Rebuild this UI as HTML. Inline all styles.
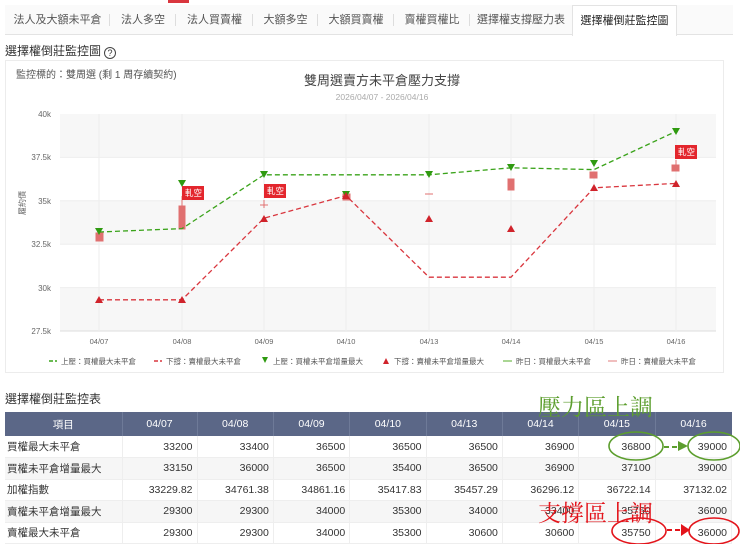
<!DOCTYPE html>
<html><head><meta charset="utf-8">
<style>
*{margin:0;padding:0;box-sizing:border-box}
body{width:740px;height:544px;overflow:hidden;background:#fff;font-family:"Liberation Sans","Noto Sans CJK TC",sans-serif;color:#333;position:relative}
.tabs{position:absolute;left:5px;top:5px;width:728px;height:30px;border-bottom:1px solid #e3e3e3;background:#fafafa;display:flex;font-size:11px;color:#555}
.tabs div{height:30px;line-height:30px;text-align:center;position:relative}
.tabs div.sep:after{content:"";position:absolute;right:0;top:9px;height:12px;border-right:1px solid #ddd}
.tabs .act{background:#fff;border:1px solid #e3e3e3;border-bottom:none;height:31px;color:#222}
.redbar{position:absolute;left:168px;top:0;width:21px;height:3px;background:#d9363e}
.h1{position:absolute;left:5px;top:42px;font-size:12px;color:#333}
.q{display:inline-block;width:12px;height:12px;border:1px solid #444;border-radius:50%;font-size:9px;line-height:10px;text-align:center;vertical-align:-1px;margin-left:3px}
table{position:absolute;left:5px;top:412px;border-collapse:collapse;font-size:10.5px;width:727px}
th{background:#5b6787;color:#fff;font-weight:normal;height:24px;border-right:1px solid #6e7a98}
td{height:21.5px;text-align:right;padding-right:4px;border-right:1px solid #eee;border-bottom:1px solid #eee;color:#333}
td:first-child{text-align:left;padding-left:2px}
tr:nth-child(odd) td{background:#f6f6f6}
</style></head><body>
<div class="redbar"></div>
<div class="tabs">
<div class="sep" style="width:105px">法人及大額未平倉</div>
<div class="sep" style="width:66px">法人多空</div>
<div class="sep" style="width:77px">法人買賣權</div>
<div class="sep" style="width:65px">大額多空</div>
<div class="sep" style="width:76px">大額買賣權</div>
<div class="sep" style="width:76px">賣權買權比</div>
<div style="width:102px">選擇權支撐壓力表</div>
<div class="act" style="width:105px">選擇權倒莊監控圖</div>
</div>
<div class="h1">選擇權倒莊監控圖<span class="q">?</span></div>
<svg width="740" height="405" style="position:absolute;left:0;top:0" font-family="Liberation Sans,Noto Sans CJK TC,sans-serif">
<rect x="5.5" y="60.5" width="718" height="312" fill="#fff" stroke="#ececec"/>
<text x="16" y="78" font-size="10" fill="#555" dy="0">監控標的：雙周選 (剩 1 周存續契約)</text>
<text x="382" y="85" font-size="13" fill="#444" text-anchor="middle">雙周選賣方未平倉壓力支撐</text>
<text x="382" y="100" font-size="8.5" fill="#aaa" text-anchor="middle">2026/04/07 - 2026/04/16</text>
<rect x="60" y="114" width="656" height="43.4" fill="#f7f7f7"/>
<rect x="60" y="200.8" width="656" height="43.4" fill="#f7f7f7"/>
<rect x="60" y="287.6" width="656" height="43.4" fill="#f7f7f7"/>
<g stroke="#eee"><line x1="60" y1="157.4" x2="716" y2="157.4"/><line x1="60" y1="200.8" x2="716" y2="200.8"/><line x1="60" y1="244.2" x2="716" y2="244.2"/><line x1="60" y1="287.6" x2="716" y2="287.6"/><line x1="60" y1="331" x2="716" y2="331" stroke="#ddd"/>
<path d="M99 114V331M182 114V331M264 114V331M346 114V331M429 114V331M511 114V331M594 114V331M676 114V331"/></g>
<g font-size="8" fill="#666" text-anchor="end"><text x="51" y="117">40k</text><text x="51" y="160">37.5k</text><text x="51" y="204">35k</text><text x="51" y="247">32.5k</text><text x="51" y="291">30k</text><text x="51" y="334">27.5k</text></g>
<text transform="translate(25,215) rotate(-90)" font-size="8" fill="#666">履約價</text>
<g font-size="7.5" fill="#666" text-anchor="middle"><text x="99" y="344">04/07</text><text x="182" y="344">04/08</text><text x="264" y="344">04/09</text><text x="346" y="344">04/10</text><text x="429" y="344">04/13</text><text x="511" y="344">04/14</text><text x="594" y="344">04/15</text><text x="676" y="344">04/16</text></g>
<g fill="#e07070" stroke="#e07070"><rect x="96" y="233" width="7" height="8"/><rect x="179" y="206" width="6" height="23"/><line x1="182" y1="196" x2="182" y2="206"/><rect x="343" y="194" width="7" height="6"/><line x1="260" y1="205" x2="268" y2="205"/><line x1="264" y1="200" x2="264" y2="208"/><line x1="425" y1="194" x2="433" y2="194"/><rect x="508" y="179" width="6" height="11"/><rect x="590" y="172" width="7" height="6"/><rect x="672" y="165" width="7" height="6"/><line x1="676" y1="160" x2="676" y2="165"/></g>
<path d="M99 232L182 228.6L264 174.8L429 174.8L511 167.8L594 169.6L676 131.4" fill="none" stroke="#3aa31a" stroke-width="1.3" stroke-dasharray="5,3"/>
<path d="M99 299.8L182 299.8L264 218.2L346 195.6L429 277.2L511 277.2L594 187.8L676 183.4" fill="none" stroke="#d9363e" stroke-width="1.3" stroke-dasharray="5,3"/>
<g fill="#2f9a10"><path d="M95 228h8l-4 7z"/><path d="M178 180h8l-4 7z"/><path d="M260 171h8l-4 7z"/><path d="M342 191h8l-4 7z"/><path d="M425 171h8l-4 7z"/><path d="M507 164h8l-4 7z"/><path d="M590 160h8l-4 7z"/><path d="M672 128h8l-4 7z"/></g>
<g fill="#d0232b"><path d="M95 303h8l-4-7z"/><path d="M178 303h8l-4-7z"/><path d="M260 222h8l-4-7z"/><path d="M342 199h8l-4-7z"/><path d="M425 222h8l-4-7z"/><path d="M507 232h8l-4-7z"/><path d="M590 191h8l-4-7z"/><path d="M672 187h8l-4-7z"/></g>
<g font-size="8.5" fill="#fff"><rect x="182" y="186" width="22" height="14" fill="#e3262d"/><text x="185" y="196">軋空</text><rect x="264" y="184" width="22" height="14" fill="#e3262d"/><text x="267" y="194">軋空</text><rect x="675" y="145" width="22" height="14" fill="#e3262d"/><text x="678" y="155">軋空</text></g>
<g font-size="7.5" fill="#555">
<path d="M49 361h4M55 361h2" stroke="#3aa31a" stroke-width="1.5"/><text x="61" y="364">上壓：買權最大未平倉</text>
<path d="M154 361h4M160 361h2" stroke="#d9363e" stroke-width="1.5"/><text x="166" y="364">下撐：賣權最大未平倉</text>
<path d="M262 357h6l-3 6z" fill="#2f9a10"/><text x="273" y="364">上壓：買權未平倉增量最大</text>
<path d="M383 364h6l-3-6z" fill="#d0232b"/><text x="394" y="364">下撐：賣權未平倉增量最大</text>
<path d="M503 361h9" stroke="#7dc05a" stroke-width="1.3"/><text x="516" y="364">昨日：買權最大未平倉</text>
<path d="M608 361h9" stroke="#e89a9a" stroke-width="1.3"/><text x="621" y="364">昨日：賣權最大未平倉</text>
</g>
<text x="5" y="403" font-size="12" fill="#333">選擇權倒莊監控表</text>
</svg>
<table>
<tr><th style="width:117px">項目</th><th style="width:75px">04/07</th><th>04/08</th><th>04/09</th><th>04/10</th><th>04/13</th><th>04/14</th><th>04/15</th><th style="border:none">04/16</th></tr>
<tr><td>買權最大未平倉</td><td>33200</td><td>33400</td><td>36500</td><td>36500</td><td>36500</td><td>36900</td><td>36800</td><td>39000</td></tr>
<tr><td>買權未平倉增量最大</td><td>33150</td><td>36000</td><td>36500</td><td>35400</td><td>36500</td><td>36900</td><td>37100</td><td>39000</td></tr>
<tr><td>加權指數</td><td>33229.82</td><td>34761.38</td><td>34861.16</td><td>35417.83</td><td>35457.29</td><td>36296.12</td><td>36722.14</td><td>37132.02</td></tr>
<tr><td>賣權未平倉增量最大</td><td>29300</td><td>29300</td><td>34000</td><td>35300</td><td>34000</td><td>33400</td><td>35750</td><td>36000</td></tr>
<tr><td>賣權最大未平倉</td><td>29300</td><td>29300</td><td>34000</td><td>35300</td><td>30600</td><td>30600</td><td>35750</td><td>36000</td></tr>
</table>
<svg width="740" height="544" style="position:absolute;left:0;top:0">
<text x="538" y="415" font-size="23" fill="#5c9e2e" font-family="Liberation Serif,Noto Serif CJK SC,serif">壓力區上調</text>
<ellipse cx="636" cy="446" rx="27" ry="14" fill="none" stroke="#5c9e2e" stroke-width="1.6"/>
<ellipse cx="714" cy="446" rx="26" ry="14" fill="none" stroke="#5c9e2e" stroke-width="1.6"/>
<path d="M664 447h16" stroke="#5c9e2e" stroke-width="2" stroke-dasharray="5,3"/><path d="M678 441l10 5-10 5z" fill="#5c9e2e"/>
<text x="538" y="521" font-size="23" fill="#e3141b" font-family="Liberation Serif,Noto Serif CJK SC,serif">支撐區上調</text>
<ellipse cx="639" cy="531" rx="27" ry="13" fill="none" stroke="#e3141b" stroke-width="1.6"/>
<ellipse cx="714" cy="531" rx="25" ry="13" fill="none" stroke="#e3141b" stroke-width="1.6"/>
<path d="M667 530h16" stroke="#e3141b" stroke-width="2" stroke-dasharray="5,3"/><path d="M681 524l9 6-9 6z" fill="#e3141b"/>
</svg>
</body></html>
